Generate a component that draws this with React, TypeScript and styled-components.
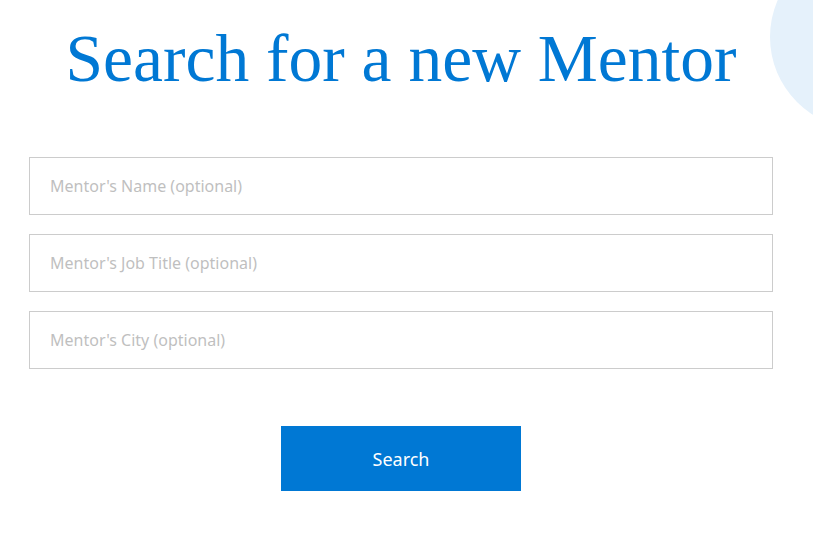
import React from "react";
import styled, { createGlobalStyle } from "styled-components";

const Global = createGlobalStyle`
  html, body { margin: 0; padding: 0; background: #ffffff; }
  body { font-family: "Noto Sans", "Open Sans", sans-serif; overflow: hidden; }
`;

const Page = styled.div`
  position: relative;
  width: 813px;
  height: 553px;
  overflow: hidden;
  background: #ffffff;
`;

const Bubble = styled.div`
  position: absolute;
  left: 770px;
  top: -55px;
  width: 184px;
  height: 184px;
  border-radius: 50%;
  background: #e5f1fb;
`;

const Container = styled.div`
  position: relative;
  width: 744px;
  margin-left: 29px;
  display: flex;
  flex-direction: column;
  align-items: stretch;
`;

const Title = styled.h1`
  margin: 19px 0 0;
  font-family: "Liberation Serif", "Times New Roman", serif;
  font-weight: 400;
  font-size: 67.5px;
  line-height: 80px;
  color: #0078d4;
  text-align: center;
`;

const Form = styled.form`
  margin-top: 58px;
  display: flex;
  flex-direction: column;
  gap: 19.5px;
`;

const Field = styled.input`
  box-sizing: border-box;
  width: 100%;
  height: 57.5px;
  padding: 0 20px;
  border: 1px solid #cccccc;
  border-radius: 0;
  font-family: "Noto Sans", "Open Sans", sans-serif;
  font-size: 16px;
  color: #333;
  outline: none;
  &::placeholder { color: #bfbfbf; }
`;

const Actions = styled.div`
  display: flex;
  justify-content: center;
  margin-top: 38px;
`;

const Button = styled.button`
  width: 240px;
  height: 65px;
  border: none;
  border-radius: 0;
  background: #0078d4;
  color: #ffffff;
  font-family: "Noto Sans", "Open Sans", sans-serif;
  font-size: 18px;
  cursor: pointer;
`;

export default function App() {
  return (
    <Page>
      <Global />
      <Bubble />
      <Container>
        <Title>Search for a new Mentor</Title>
        <Form onSubmit={(e) => e.preventDefault()}>
          <Field placeholder="Mentor's Name (optional)" />
          <Field placeholder="Mentor's Job Title (optional)" />
          <Field placeholder="Mentor's City (optional)" />
          <Actions>
            <Button type="submit">Search</Button>
          </Actions>
        </Form>
      </Container>
    </Page>
  );
}
